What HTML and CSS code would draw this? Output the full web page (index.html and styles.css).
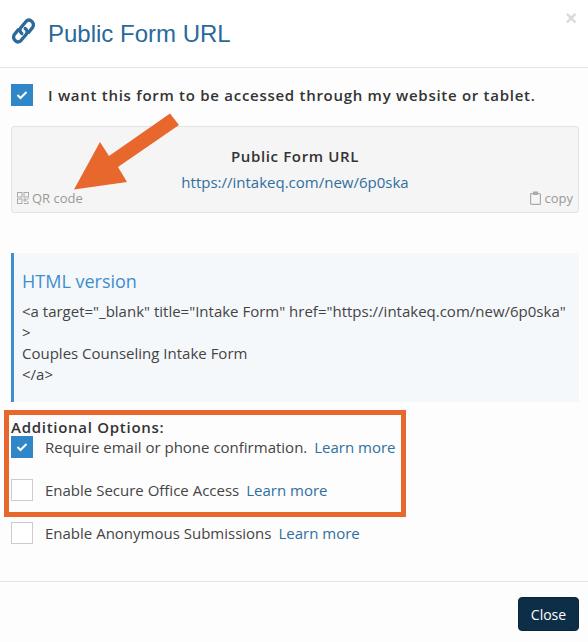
FILE: index.html
```html
<!DOCTYPE html>
<html>
<head>
<meta charset="UTF-8">
<title>Public Form URL</title>
<link rel="stylesheet" href="styles.css">
</head>
<body>
	<div class="modal">
		<div class="modal-header">
			<svg class="link-icon" width="23" height="26" viewBox="2 2.500 20 21" preserveAspectRatio="none" fill="none" stroke="#2a6a99" stroke-width="2.800" stroke-linecap="round" stroke-linejoin="round">
				<path d="M10.500 15 A3.200 3.200 0 0 1 9.500 10.500 L14.500 5 A3.800 3.800 0 0 1 20 10 L16.500 14"/>
				<path d="M13.500 11 A3.200 3.200 0 0 1 14.500 15.500 L9.500 21 A3.800 3.800 0 0 1 4 16 L7.500 12"/>
			</svg>
			<h4 class="modal-title">Public Form URL</h4>
			<span class="modal-close">×</span>
		</div>
		<div class="modal-body">
			<div class="check-row main-check">
				<span class="check checked"><svg width="12" height="10" viewBox="0 0 12 10" fill="none" stroke="#fff" stroke-width="2"><path d="M1.500 5 L4.500 8 L10.500 2"/></svg></span>
				<span class="main-label">I want this form to be accessed through my website or tablet.</span>
			</div>
			<div class="well">
				<div class="well-title">Public Form URL</div>
				<a class="well-link">https://intakeq.com/new/6p0ska</a>
				<div class="well-tools">
					<span class="tool">
						<svg width="12" height="12" viewBox="0 0 12 12" fill="none" stroke="#aaa" stroke-width="1"><rect x=".5" y=".5" width="4.500" height="4.500"/><rect x="7" y=".5" width="4.500" height="4.500"/><rect x=".5" y="7" width="4.500" height="4.500"/><path d="M7 7h2v2H7zM10 7h1.500M7 11.500h4.500M11 9v2"/></svg>
						QR code
					</span>
					<span class="tool">
						<svg width="11" height="14" viewBox="0 0 11 14" fill="none" stroke="#aaa" stroke-width="1.200"><rect x=".6" y="2.500" width="9.800" height="10.900" rx="1"/><path d="M3.500 1h4v2.500h-4z" fill="#aaa"/></svg>
						copy
					</span>
				</div>
			</div>
			<div class="callout">
				<h4>HTML version</h4>
				<p>&lt;a target="_blank" title="Intake Form" href="https://intakeq.com/new/6p0ska"<br>&gt;<br>Couples Counseling Intake Form<br>&lt;/a&gt;</p>
			</div>
			<div class="options-title">Additional Options:</div>
			<div class="check-row option">
				<span class="check checked"><svg width="12" height="10" viewBox="0 0 12 10" fill="none" stroke="#fff" stroke-width="2"><path d="M1.500 5 L4.500 8 L10.500 2"/></svg></span>
				<span>Require email or phone confirmation.</span>
				<a>Learn more</a>
			</div>
			<div class="check-row option">
				<span class="check"></span>
				<span>Enable Secure Office Access</span>
				<a>Learn more</a>
			</div>
			<div class="check-row option">
				<span class="check"></span>
				<span>Enable Anonymous Submissions</span>
				<a>Learn more</a>
			</div>
		</div>
		<div class="modal-footer">
			<button class="btn-close">Close</button>
		</div>
	</div>
	<!-- annotations drawn over the screenshot -->
	<svg class="arrow" width="588" height="220" viewBox="0 0 588 220">
		<polygon points="170,113.500 179,125 118,167 127,182 74,189.500 100,142 109,156" fill="#e8672c"/>
	</svg>
	<div class="highlight"></div>
</body>
</html>
```

FILE: styles.css
```css
* {
	box-sizing: border-box;
}

body {
	margin: 0;
	width: 588px;
	height: 642px;
	overflow: hidden;
	position: relative;
	background: #fdfdfd;
	font-family: "Open Sans", sans-serif;
	font-size: 15px;
	color: #444;
}

a {
	color: #2f6f9f;
}

.modal-header {
	height: 68px;
	border-bottom: 1px solid #e5e5e5;
	padding: 0 11px 0 12px;
	display: flex;
	align-items: center;
	gap: 13px;
	background: #fff;
}

.link-icon {
	margin-bottom: 5px;
}

.modal-title {
	margin: 0;
	flex: 1;
	font-family: "Liberation Sans", sans-serif;
	font-size: 24px;
	font-weight: normal;
	color: #2a6a99;
}

.modal-close {
	font-family: "Liberation Sans", sans-serif;
	font-size: 20px;
	font-weight: bold;
	color: #d9d9d9;
	margin: 0 0 30px 0;
}

.modal-body {
	padding: 16px 9px 0 11px;
	height: 513px;
}

.check-row {
	display: flex;
	align-items: center;
}

.check {
	width: 22px;
	height: 22px;
	flex: none;
	border: 1px solid #ccc;
	background: #fff;
	display: flex;
	align-items: center;
	justify-content: center;
}

.check.checked {
	background: #2f87c8;
	border-color: #2f87c8;
}

.main-label {
	margin-left: 15px;
	font-weight: 600;
	letter-spacing: .72px;
	color: #333;
}

.well {
	margin-top: 20px;
	height: 87px;
	background: #f5f5f5;
	border: 1px solid #e3e3e3;
	border-radius: 3px;
	padding: 20px 5px 0;
	text-align: center;
}

.well-title {
	font-weight: 600;
	letter-spacing: .65px;
	line-height: 19px;
	color: #333;
}

.well-link {
	display: block;
	margin-top: 7px;
	line-height: 19px;
}

.well-tools {
	display: flex;
	justify-content: space-between;
	margin-top: -2px;
	font-size: 13px;
	line-height: 16px;
	color: #999;
}

.tool {
	display: flex;
	align-items: center;
	gap: 3px;
}

.callout {
	margin-top: 40px;
	height: 149px;
	background: #f4f8fb;
	border-left: 3px solid #3d8fce;
	padding: 16px 8px 0 8px;
}

.callout h4 {
	margin: 0;
	font-size: 18px;
	font-weight: normal;
	line-height: 24px;
	color: #3d8fce;
}

.callout p {
	margin: 8px 0 0;
	line-height: 21px;
}

.options-title {
	margin-top: 16px;
	font-weight: 600;
	letter-spacing: .72px;
	line-height: 18px;
	color: #333;
}

.option {
	margin-bottom: 21px;
	gap: 5px;
}

.option .check {
	margin-right: 7px;
}

.option a {
	margin-left: 2px;
}

.modal-footer {
	border-top: 1px solid #e5e5e5;
	height: 61px;
	padding: 15px 9px 0 0;
	text-align: right;
}

.btn-close {
	width: 61px;
	height: 34px;
	background: #0c2f47;
	border: 1px solid #0a2538;
	border-radius: 4px;
	color: #fff;
	font-family: "Open Sans", sans-serif;
	font-size: 14px;
}

.arrow {
	position: absolute;
	left: 0;
	top: 0;
}

.highlight {
	position: absolute;
	left: 4px;
	top: 410px;
	width: 402px;
	height: 107px;
	border: 5px solid #e8672c;
}
```
